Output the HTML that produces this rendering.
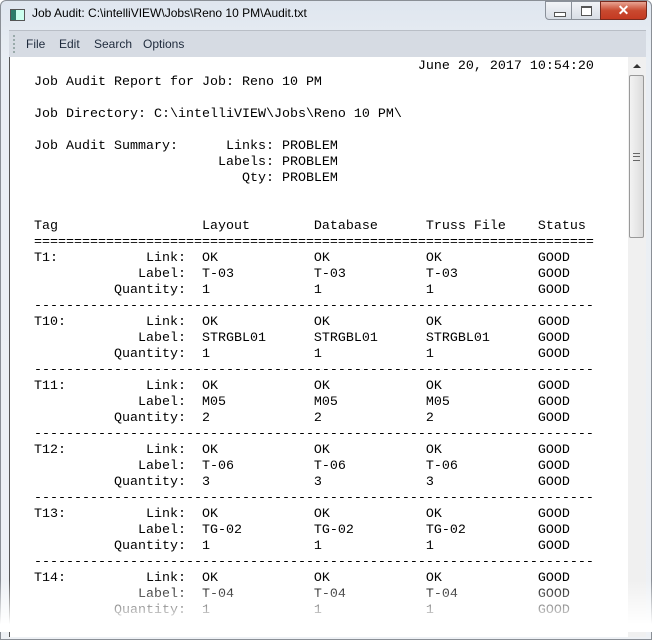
<!DOCTYPE html>
<html><head><style>
body{margin:0;width:654px;height:632px;overflow:hidden;background:#fff;font-family:"Liberation Sans",sans-serif;}
.win{position:absolute;left:0;top:0;width:652px;height:640px;background:linear-gradient(#dfe6ef,#e9eef4 60px,#eef1f5);border:1px solid #8a8f96;border-radius:6px 6px 0 0;box-sizing:border-box;}
.title{position:absolute;left:31px;top:5px;font-size:12px;color:#000;}
.icon{position:absolute;left:9px;top:8px;width:13px;height:10px;border:1px solid #555;background:linear-gradient(90deg,#2d7d6a 40%,#cfe 40%);}
.b{position:absolute;top:0;height:19px;border:1px solid #8a9099;box-sizing:border-box;background:linear-gradient(#f2f4f7,#d8dde5);}
.menu{position:absolute;left:8px;top:29px;width:637px;height:27px;background:#d6dbe3;border-top:1px solid #b9bec6;}
.menu span{position:absolute;top:6px;font-size:12px;color:#1e2a3c;}
.grip{position:absolute;left:4px;top:4px;width:2px;height:18px;border-left:2px dotted #9aa;}
.content{position:absolute;left:8px;top:56px;width:620px;height:580px;background:#fff;border-left:1px solid #555;}
pre{position:absolute;left:24px;top:2px;margin:0;font-family:"Liberation Mono",monospace;font-size:13.33px;line-height:16px;color:#000;}
.sb{position:absolute;left:627px;top:56px;width:18px;height:580px;background:#f0f0f0;}
.thumb{position:absolute;left:1px;top:18px;width:15px;height:163px;border:1px solid #999;border-radius:2px;background:linear-gradient(90deg,#f3f3f3,#dcdcdc);box-sizing:border-box;}
.fade{position:absolute;left:0;top:580px;width:654px;height:52px;background:linear-gradient(rgba(255,255,255,0),#fff 85%);}
</style></head><body>
<div class="win">
<div class="icon"></div>
<div class="title">Job Audit: C:\intelliVIEW\Jobs\Reno 10 PM\Audit.txt</div>
<div class="b" style="left:544px;width:27px;border-radius:0 0 0 4px"><div style="position:absolute;left:8px;top:10px;width:10px;height:3px;border:1px solid #555;background:#fff"></div></div>
<div class="b" style="left:570px;width:30px"><div style="position:absolute;left:9px;top:4px;width:9px;height:7px;border:1px solid #555;border-top-width:2px;background:#fff"></div></div>
<div class="b" style="left:599px;width:47px;background:linear-gradient(#e8a493,#c94a30 50%,#c43a22);border-color:#7a2a1e;border-radius:0 0 4px 0;color:#fff;font-weight:bold;font-size:14px;text-align:center;line-height:17px">✕</div>
<div class="menu"><div class="grip"></div><span style="left:17px">File</span><span style="left:50px">Edit</span><span style="left:85px">Search</span><span style="left:134px">Options</span></div>
<div class="content"><pre>                                                June 20, 2017 10:54:20
Job Audit Report for Job: Reno 10 PM

Job Directory: C:\intelliVIEW\Jobs\Reno 10 PM\

Job Audit Summary:      Links: PROBLEM
                       Labels: PROBLEM
                          Qty: PROBLEM


Tag                  Layout        Database      Truss File    Status
======================================================================
T1:           Link:  OK            OK            OK            GOOD
             Label:  T-03          T-03          T-03          GOOD
          Quantity:  1             1             1             GOOD
----------------------------------------------------------------------
T10:          Link:  OK            OK            OK            GOOD
             Label:  STRGBL01      STRGBL01      STRGBL01      GOOD
          Quantity:  1             1             1             GOOD
----------------------------------------------------------------------
T11:          Link:  OK            OK            OK            GOOD
             Label:  M05           M05           M05           GOOD
          Quantity:  2             2             2             GOOD
----------------------------------------------------------------------
T12:          Link:  OK            OK            OK            GOOD
             Label:  T-06          T-06          T-06          GOOD
          Quantity:  3             3             3             GOOD
----------------------------------------------------------------------
T13:          Link:  OK            OK            OK            GOOD
             Label:  TG-02         TG-02         TG-02         GOOD
          Quantity:  1             1             1             GOOD
----------------------------------------------------------------------
T14:          Link:  OK            OK            OK            GOOD
             Label:  T-04          T-04          T-04          GOOD
          Quantity:  1             1             1             GOOD
----------------------------------------------------------------------</pre></div>
<div class="sb"><div style="position:absolute;left:5px;top:7px;border:4px solid transparent;border-bottom:4px solid #333;border-top:0"></div><div class="thumb"><div style="position:absolute;left:3px;top:77px;width:7px;height:6px;border-top:1px solid #666;border-bottom:1px solid #666"></div><div style="position:absolute;left:3px;top:80px;width:7px;border-top:1px solid #666"></div></div></div>
</div>
<div class="fade"></div>
</body></html>
